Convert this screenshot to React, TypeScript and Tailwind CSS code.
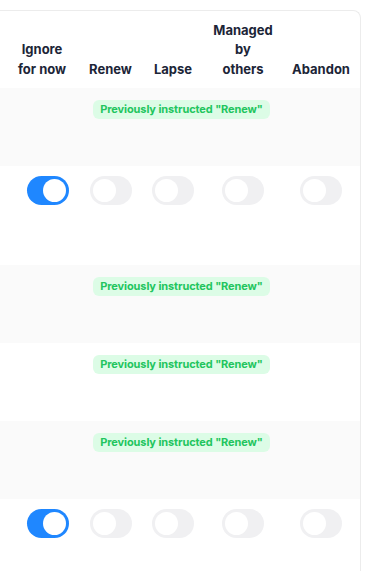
import React from "react";

const cols = "grid grid-cols-[79px_63px_62px_78px_78px]";

function Toggle({ on }: { on?: boolean }) {
  return (
    <div
      className={
        "w-[42px] h-[29px] rounded-full p-[3px] flex " +
        (on ? "bg-[#1f87ff] justify-end" : "bg-[#f0f0f2] justify-start")
      }
    >
      <div className="w-[23px] h-[23px] rounded-full bg-white" />
    </div>
  );
}

function Badge() {
  return (
    <div className="flex justify-center pl-[3px] pt-[12px]">
      <div className="h-[19px] px-[7px] rounded-[6px] bg-[#dcfce6] text-[#22c55e] text-[11px] leading-[19px] font-bold tracking-[-0.1px]">
        Previously instructed "Renew"
      </div>
    </div>
  );
}

function ToggleRow({ h }: { h: string }) {
  return (
    <div className={cols + " pt-[10px] bg-white " + h}>
      <div className="flex justify-center pl-[17px]">
        <Toggle on />
      </div>
      <div className="flex justify-center">
        <Toggle />
      </div>
      <div className="flex justify-center">
        <Toggle />
      </div>
      <div className="flex justify-center">
        <Toggle />
      </div>
      <div className="flex justify-center">
        <Toggle />
      </div>
    </div>
  );
}

export default function App() {
  return (
    <div
      className="w-[366px] h-[571px] overflow-hidden bg-white pt-[10px]"
      style={{ fontFamily: "Inter, 'Noto Sans', sans-serif" }}
    >
      <div className="w-[361px] h-[600px] border-t border-r border-[#ececec] rounded-tr-[8px] bg-white">
        <div
          className={
            cols +
            " items-end h-[77px] pb-[9px] text-[13px] leading-[19.5px] font-bold text-[#1c2537] text-center"
          }
        >
          <div className="pl-[5px]">
            Ignore
            <br />
            for now
          </div>
          <div>Renew</div>
          <div>Lapse</div>
          <div>
            Managed
            <br />
            by
            <br />
            others
          </div>
          <div>Abandon</div>
        </div>
        <div className="h-[78px] bg-[#fafafa]">
          <Badge />
        </div>
        <ToggleRow h="h-[99px]" />
        <div className="h-[78px] bg-[#fafafa]">
          <Badge />
        </div>
        <div className="h-[78px] bg-white">
          <Badge />
        </div>
        <div className="h-[78px] bg-[#fafafa]">
          <Badge />
        </div>
        <ToggleRow h="h-[100px]" />
      </div>
    </div>
  );
}
